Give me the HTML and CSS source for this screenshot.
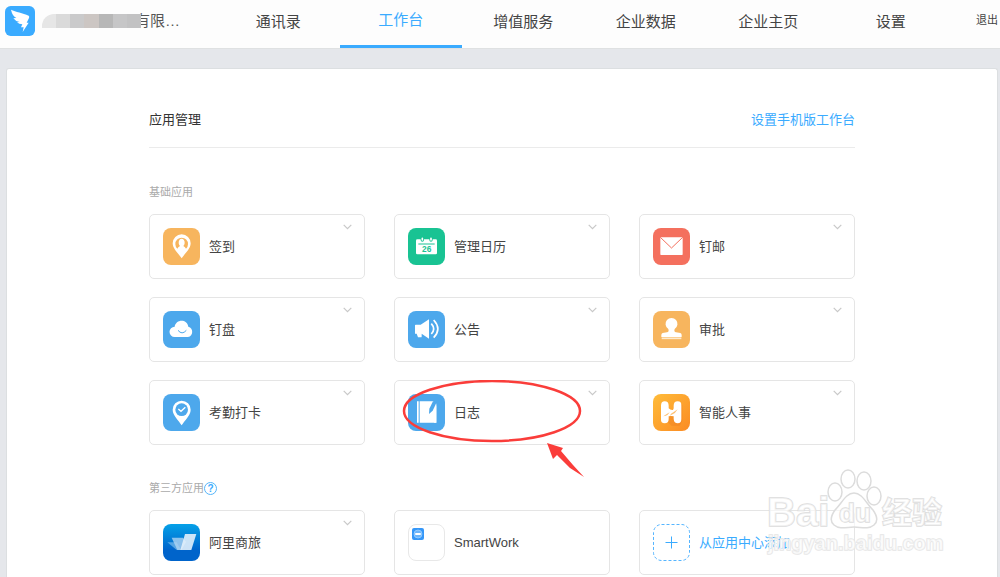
FILE: index.html
```html
<!DOCTYPE html>
<html lang="zh-CN">
<head>
<meta charset="utf-8">
<meta name="viewport" content="width=device-width, initial-scale=1">
<title>工作台</title>
<link rel="stylesheet" href="styles.css">
</head>
<body>
<svg class="defs" aria-hidden="true">
  <symbol id="chevron" viewBox="0 0 9 6"><path d="M.7 .8 4.500 4.600 8.300 .8" fill="none" stroke="currentColor" stroke-width="1.200"/></symbol>
  <linearGradient id="orange" x1="0" y1="0" x2="1" y2="1"><stop offset="0" stop-color="#ffbc39"/><stop offset="1" stop-color="#fb8b24"/></linearGradient>
  <linearGradient id="ocean" x1="0" y1="0" x2="0" y2="1"><stop offset="0" stop-color="#05a1e8"/><stop offset=".7" stop-color="#0064cb"/></linearGradient>
</svg>

<header class="topbar">
  <div class="brand">
    <svg class="logo" viewBox="0 0 90 90" aria-label="钉钉" role="img">
      <rect width="90" height="90" rx="17" fill="#3aabff"/>
      <path fill="#fff" d="M18 11C32 18 53 20 71 29Q74 31 72 36L65 50H71L53 78 56 64H48L52 55Q42 55 36 49L44 48Q31 46 25 37L34 36Q22 30 18 11Z"/>
    </svg>
    <span class="mosaic" aria-hidden="true"><i class="m1"></i><i class="m2"></i><i class="m3"></i><i class="m4"></i><i class="m5"></i><i class="m6"></i><i class="m7"></i></span>
    <span class="company">有限…</span>
  </div>
  <nav class="nav">
    <a href="#">通讯录</a>
    <a href="#" class="active" aria-current="page">工作台</a>
    <a href="#">增值服务</a>
    <a href="#">企业数据</a>
    <a href="#">企业主页</a>
    <a href="#">设置</a>
  </nav>
  <a href="#" class="logout">退出</a>
</header>

<main class="panel">
  <div class="content">
    <div class="heading">
      <h1>应用管理</h1>
      <a href="#">设置手机版工作台</a>
    </div>

    <section>
      <h2>基础应用</h2>
      <div class="grid">
        <article class="card">
          <a href="#"><svg class="icon" viewBox="0 0 111 111"><rect width="111" height="111" rx="24" fill="#f7b55e"/><path fill="#fff" d="M56 91C48 78 29 63 29 46a27 27 0 0 1 54 0C83 63 64 78 56 91Z"/><path fill="#f7b55e" d="M43 62A19 19 0 1 1 69 62Q67 57 61 54A9 12 0 1 0 51 54Q45 57 43 62Z"/></svg>签到</a>
          <button type="button" aria-label="签到 更多"><svg><use href="#chevron"/></svg></button>
        </article>
        <article class="card">
          <a href="#"><svg class="icon" viewBox="0 0 111 111"><rect width="111" height="111" rx="24" fill="#19c393"/><rect x="24" y="34" width="63" height="45" rx="4" fill="#fff"/><path d="M31 48H80" stroke="#19c393" stroke-width="3"/><path d="M43 29V36M69 29V36" stroke="#19c393" stroke-width="10" stroke-linecap="round"/><path d="M43 31V36M69 31V36" stroke="#fff" stroke-width="5" stroke-linecap="round"/><text class="date" x="56" y="72" text-anchor="middle">26</text></svg>管理日历</a>
          <button type="button" aria-label="管理日历 更多"><svg><use href="#chevron"/></svg></button>
        </article>
        <article class="card">
          <a href="#"><svg class="icon" viewBox="0 0 111 111"><rect width="111" height="111" rx="24" fill="#f4705e"/><rect x="22" y="28" width="67" height="53" rx="2" fill="#fff"/><path d="M22 28 55.500 60 89 28" fill="none" stroke="#f4705e" stroke-width="3"/></svg>钉邮</a>
          <button type="button" aria-label="钉邮 更多"><svg><use href="#chevron"/></svg></button>
        </article>
        <article class="card">
          <a href="#"><svg class="icon" viewBox="0 0 111 111"><rect width="111" height="111" rx="24" fill="#4da8ec"/><path fill="#fff" d="M35 78A15 15 0 0 1 35 47C38 24 72 22 76 47A16 16 0 0 1 75 78Z"/><path d="M45 58Q57 73 70 58" fill="none" stroke="#4da8ec" stroke-width="3"/></svg>钉盘</a>
          <button type="button" aria-label="钉盘 更多"><svg><use href="#chevron"/></svg></button>
        </article>
        <article class="card">
          <a href="#"><svg class="icon" viewBox="0 0 111 111"><rect width="111" height="111" rx="24" fill="#4da8ec"/><path fill="#fff" d="M21 43Q21 41 23 41H38L63 25V83L41 68V77Q41 79 38 79H30L26 68H21Z"/><path d="M70 38Q84 54 70 69M77 27Q102 54 77 80" fill="none" stroke="#fff" stroke-width="5"/></svg>公告</a>
          <button type="button" aria-label="公告 更多"><svg><use href="#chevron"/></svg></button>
        </article>
        <article class="card">
          <a href="#"><svg class="icon" viewBox="0 0 111 111"><rect width="111" height="111" rx="24" fill="#f7b55e"/><path fill="#fff" d="M46 54A18 18 0 1 1 65 54Q62 63 69 64L82 66Q86 67 86 72V78H25V72Q25 67 29 66L42 64Q49 63 46 54Z"/><path d="M26 82H85" stroke="#fdebd0" stroke-width="5"/></svg>审批</a>
          <button type="button" aria-label="审批 更多"><svg><use href="#chevron"/></svg></button>
        </article>
        <article class="card">
          <a href="#"><svg class="icon" viewBox="0 0 111 111"><rect width="111" height="111" rx="24" fill="#4da8ec"/><path fill="#fff" d="M56 94C48 80 29 65 29 47a27 27 0 0 1 54 0C83 65 64 80 56 94Z"/><circle cx="56" cy="47" r="19" fill="#4da8ec"/><path d="M46 45 54 52 67 40" fill="none" stroke="#fff" stroke-width="4"/></svg>考勤打卡</a>
          <button type="button" aria-label="考勤打卡 更多"><svg><use href="#chevron"/></svg></button>
        </article>
        <article class="card">
          <a href="#"><svg class="icon" viewBox="0 0 111 111"><rect width="111" height="111" rx="24" fill="#4da8ec"/><path fill="#fff" d="M27 22H32V86H27ZM35 22H77L85 29V86H35Z"/><path fill="#4da8ec" d="M75 22 64 44 63 60 74 50 86 25 83 20Z"/><path fill="#fff" d="M85 34V86H78V46Z"/></svg>日志</a>
          <button type="button" aria-label="日志 更多"><svg><use href="#chevron"/></svg></button>
          <svg class="marker" viewBox="0 0 192 98" aria-hidden="true"><ellipse cx="98" cy="31" rx="88" ry="30" fill="none" stroke="#fa3d3a" stroke-width="2.500"/><path fill="#fa3d3a" d="M153 63 169 68 167 71 179 85 190 97 176 88 163 75 159 79Z"/></svg>
        </article>
        <article class="card">
          <a href="#"><svg class="icon" viewBox="0 0 111 111"><rect width="111" height="111" rx="24" fill="url(#orange)"/><path fill="#e8751b" opacity=".3" d="M44 84 55 95H80L88 80V34L80 24 62 65 48 62Z"/><path fill="#fff" d="M35 22Q47 22 47 35V43Q52 49 60 48L62 43V35Q62 22 74 22T85 35V75Q85 88 74 88T62 75V67Q53 65 47 67V75Q47 88 35 88T24 75V35Q24 22 35 22Z"/><path fill="#fbb050" opacity=".8" d="M31 67Q44 58 50 55L44 62Q40 66 31 67ZM50 65Q54 58 62 54L74 46Q68 58 56 62Z"/></svg>智能人事</a>
          <button type="button" aria-label="智能人事 更多"><svg><use href="#chevron"/></svg></button>
        </article>
      </div>
    </section>

    <section>
      <h2>第三方应用<button type="button" class="help" aria-label="帮助">?</button></h2>
      <div class="grid">
        <article class="card">
          <a href="#"><svg class="icon" viewBox="0 0 111 111"><rect width="111" height="111" rx="24" fill="url(#ocean)"/><path fill="#70b7ea" opacity=".75" d="M13 55H41L54 78H41Z"/><path fill="#afd5f3" opacity=".8" d="M26 41H60L69 54 55 78H43Z"/><path fill="#e2f0fb" opacity=".9" d="M66 30H100L85 78H52Z"/></svg>阿里商旅</a>
          <button type="button" aria-label="阿里商旅 更多"><svg><use href="#chevron"/></svg></button>
        </article>
        <article class="card">
          <a href="#"><span class="icon smart"><svg viewBox="0 0 12 12"><rect width="12" height="12" rx="2" fill="#3597f8"/><circle cx="6" cy="6" r="4" fill="#6bb5fb" stroke="#a9d5ff" stroke-width=".7"/><rect x="3" y="5" width="6" height="2" rx="1" fill="#fff"/></svg></span>SmartWork</a>
        </article>
        <article class="card add">
          <a href="#"><svg class="icon" viewBox="0 0 37 37"><rect x=".5" y=".5" width="36" height="36" rx="8" fill="none" stroke="#55b5ff" stroke-dasharray="3 2"/><path d="M12.500 18.500H24.500M18.500 12.500V24.500" stroke="#3aabff" stroke-width="1"/></svg>从应用中心添加</a>
        </article>
      </div>
    </section>
  </div>
</main>

<svg class="watermark" viewBox="0 0 184 92" aria-hidden="true">
  <g fill="#fff" fill-opacity=".6" stroke="#dcdcdc" stroke-width="1.500">
    <ellipse cx="71" cy="25" rx="7" ry="9"/><ellipse cx="84" cy="12" rx="7" ry="9"/><ellipse cx="100" cy="14" rx="7" ry="9"/><ellipse cx="110" cy="29" rx="7" ry="9"/>
    <path d="M90 26C98 26 102 36 109 43Q116 53 110 58C104 63 97 60 90 60S76 63 70 58Q64 53 71 43C78 36 82 26 90 26Z"/>
    <text class="wm-bai" x="3" y="59">Bai</text>
    <text class="wm-du" x="75" y="55">du</text>
    <text class="wm-cn" x="118" y="56">经验</text>
    <text class="wm-url" x="4" y="83">jingyan.baidu.com</text>
  </g>
</svg>
</body>
</html>
```
FILE: styles.css
```css
* { box-sizing: border-box; }

body {
  position: relative;
  margin: 0;
  min-height: 100vh;
  display: flex;
  flex-direction: column;
  background: #e5e7eb;
  color: #444;
  font-family: "Liberation Sans", "Noto Sans CJK SC", sans-serif;
  font-size: 13px;
  line-height: 20px;
}

a { color: inherit; text-decoration: none; }
button { padding: 0; border: 0; background: none; font: inherit; cursor: pointer; }
.defs { position: absolute; width: 0; height: 0; }

.topbar {
  display: flex;
  height: 49px;
  background: #fdfdfd;
  border-bottom: 1px solid #dfe1e2;
}

.brand {
  flex: 0 0 217px;
  display: flex;
  align-items: center;
  padding: 0 0 6px 5px;
  font-size: 15px;
}
.logo { width: 30px; height: 30px; margin-right: 7px; }
.mosaic {
  display: flex;
  width: 99px;
  height: 14px;
  border-top-left-radius: 12px;
  overflow: hidden;
  z-index: 1;
}
.mosaic i { flex: 1; }
.m1 { background: #e6e6e6; }
.m2 { background: #dadada; }
.m3 { background: #cacacb; }
.m4 { background: #ccc6c3; }
.m5 { background: #b7b7b7; }
.m6 { background: #c6c6c7; }
.m7 { background: #c2c2c3; }
.company { margin-left: -6px; color: #555; }

.nav { flex: 1; display: flex; }
.nav a {
  flex: 1;
  padding-top: 12px;
  text-align: center;
  font-size: 15px;
  white-space: nowrap;
}
.nav .active {
  padding-top: 10px;
  color: #3aabff;
  border-bottom: 3px solid #3aabff;
}
.logout { flex: 0 0 48px; padding: 10px 0 0 24px; font-size: 11px; }

.panel {
  flex: 1;
  margin: 19px 2px 0 6px;
  padding: 0 24px 2px;
  background: #fff;
  border: 1px solid #dcdfe1;
  border-bottom: 0;
  border-radius: 3px 3px 0 0;
}
.content { max-width: 706px; margin: 0 auto; }

.heading {
  display: flex;
  justify-content: space-between;
  padding: 41px 0 17px;
  border-bottom: 1px solid #ebebeb;
}
h1 { margin: 0; font-size: 13px; font-weight: 400; color: #333; }
.heading a { color: #3aabff; }

section { padding-top: 34px; }
section + section { padding-top: 33px; }
h2 {
  display: flex;
  align-items: center;
  height: 20px;
  margin: 0 0 12px;
  font-size: 11px;
  font-weight: 400;
  color: #aaa;
}
.help {
  width: 13px;
  height: 13px;
  border: 1px solid #55b5fa;
  border-radius: 50%;
  color: #3aabff;
  font-size: 10px;
  font-weight: 700;
  line-height: 11px;
}

.grid {
  display: grid;
  grid-template-columns: repeat(3, 1fr);
  column-gap: 29px;
  row-gap: 18px;
}
.card {
  position: relative;
  display: flex;
  align-items: flex-start;
  padding: 13px;
  border: 1px solid #e5e5e5;
  border-radius: 5px;
}
.card > a { flex: 1; display: flex; align-items: center; gap: 9px; }
.card > button { width: 9px; height: 6px; margin: -4px -1px 0 0; color: #c8c8c8; display: flex; }
.card > button svg { width: 9px; height: 6px; }
.icon { flex: none; width: 37px; height: 37px; }
.date { fill: #19c393; font-size: 25px; font-weight: 700; }
.smart { padding: 3px; border: 1px solid #e8e8e8; border-radius: 8px; }
.smart svg { display: block; width: 12px; height: 12px; }
.add > a { color: #3aabff; }

.marker {
  position: absolute;
  left: -1px;
  top: -1px;
  width: 192px;
  height: 98px;
  z-index: 1;
  pointer-events: none;
}

.watermark {
  position: absolute;
  right: 52px;
  bottom: 18px;
  width: 184px;
  height: 92px;
  pointer-events: none;
}
.watermark text { font-weight: 700; paint-order: stroke; }
.wm-bai { font-size: 40px; }
.wm-du { font-size: 26px; }
.wm-cn { font-size: 30px; }
.wm-url { font-size: 20px; stroke: #e6e6e6; }
```
